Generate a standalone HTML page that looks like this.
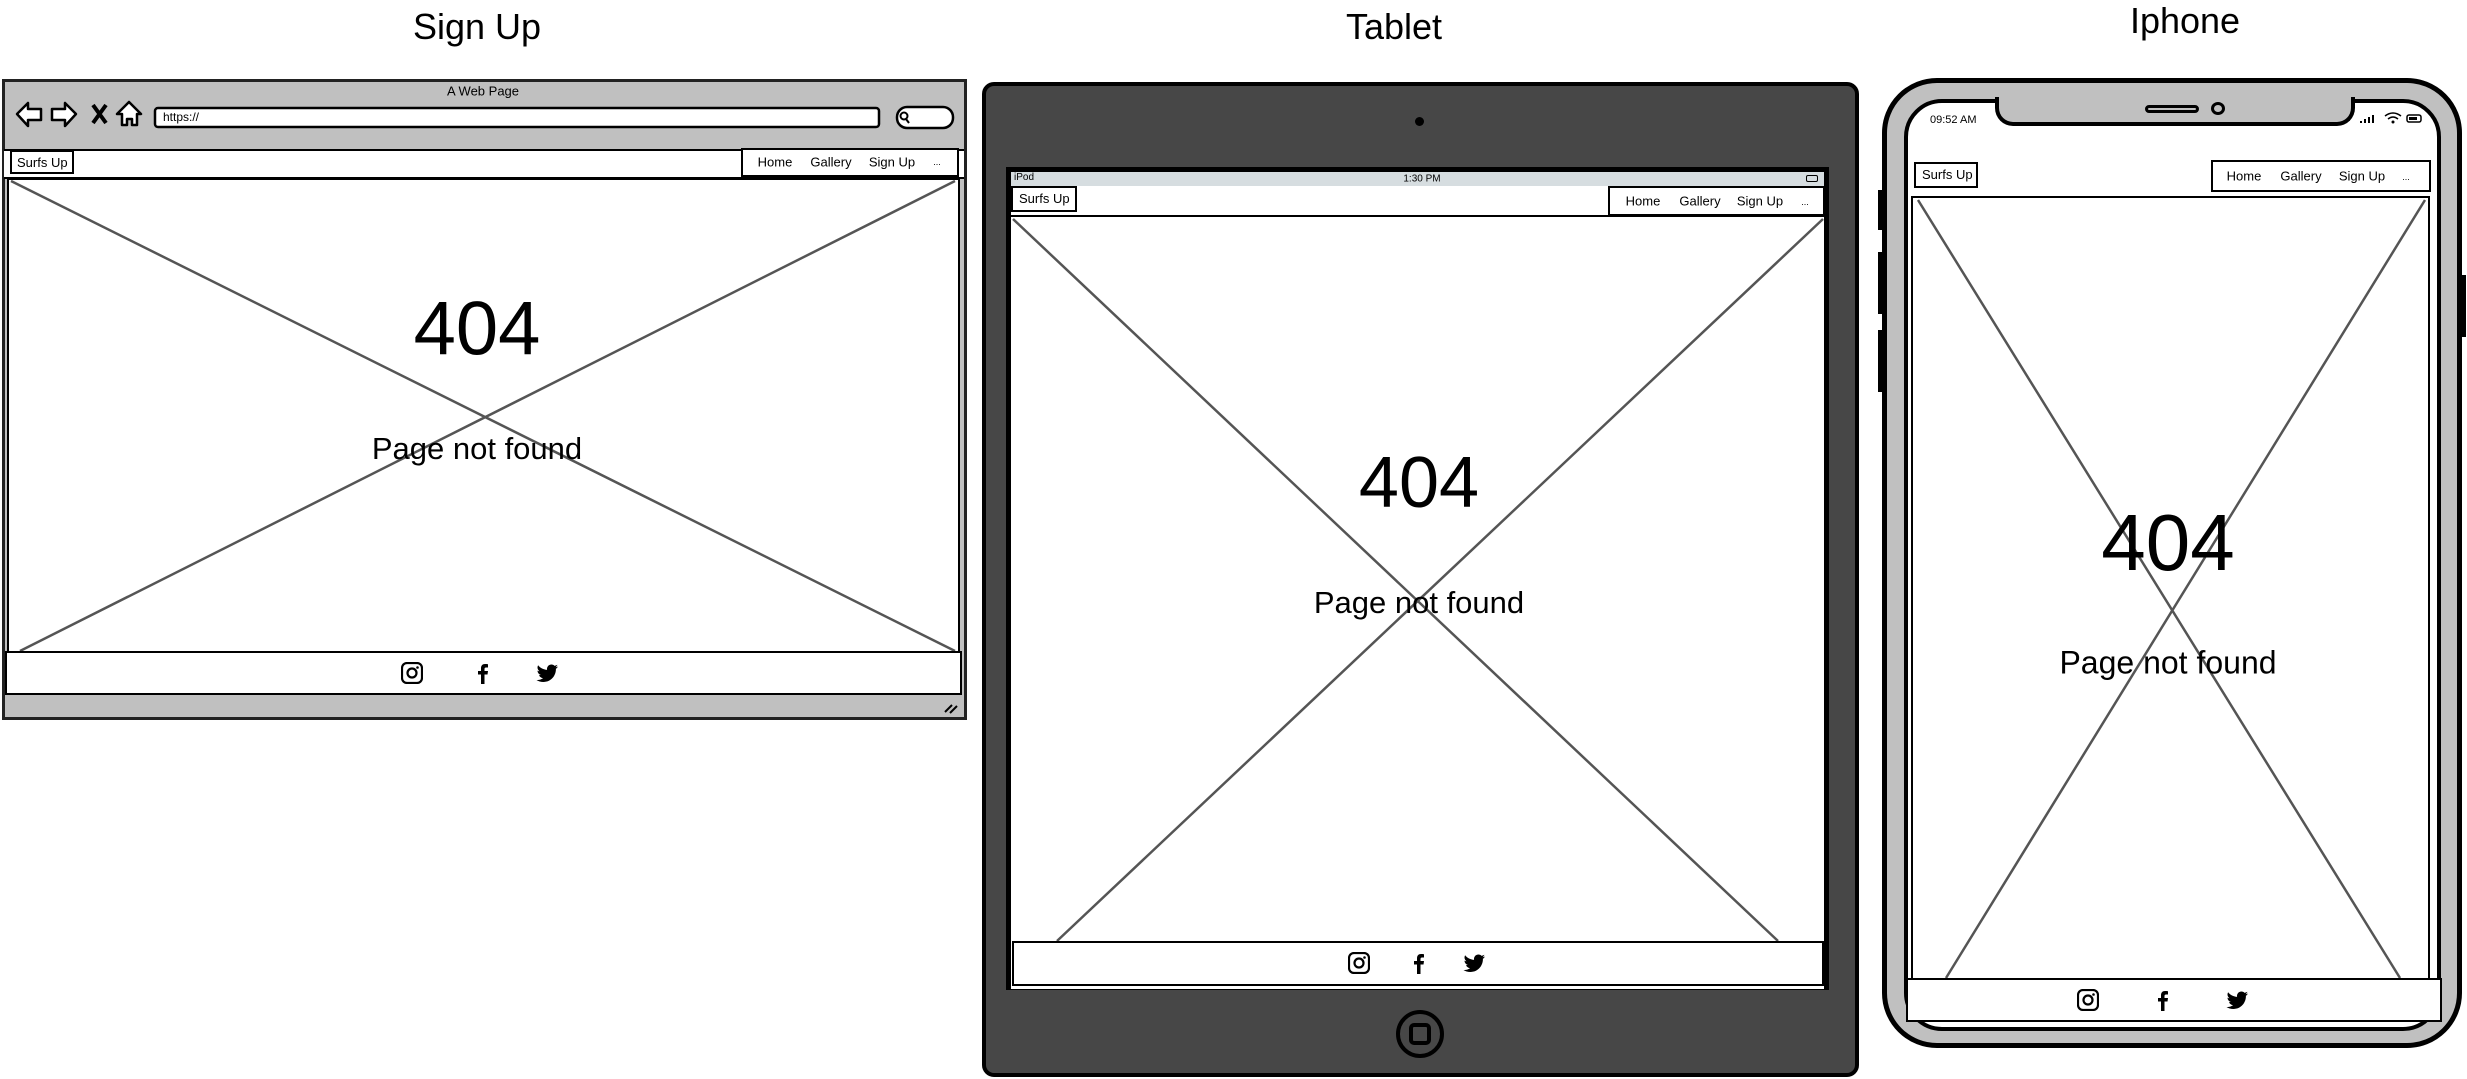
<!DOCTYPE html>
<html><head><meta charset="utf-8"><style>
*{margin:0;padding:0;box-sizing:border-box}
body{width:2467px;height:1079px;background:#fff;position:relative;overflow:hidden;font-family:"Liberation Sans",sans-serif;color:#000}
.a{position:absolute}
.t{position:absolute;white-space:nowrap;transform:translate(-50%,-50%)}
.box{position:absolute;border:2px solid #000;background:#fff}
</style></head><body>

<!-- titles -->
<div class="t" style="left:477px;top:27px;font-size:36px">Sign Up</div>
<div class="t" style="left:1394px;top:27px;font-size:36px">Tablet</div>
<div class="t" style="left:2185px;top:21px;font-size:36px">Iphone</div>

<!-- ===== Desktop browser ===== -->
<div class="a" style="left:2px;top:79px;width:965px;height:641px;background:#c0c0c0;border:3px solid #222"></div>
<div class="t" style="left:483px;top:91px;font-size:13px">A Web Page</div>
<svg class="a" style="left:0;top:0" width="980" height="740">
 <g fill="#fff" stroke="#000" stroke-width="2.5" stroke-linejoin="round">
  <path d="M17 114 L28 103 L28 109 L41 109 L41 120 L28 120 L28 126 Z"/>
  <path d="M76 114 L65 103 L65 109 L52 109 L52 120 L65 120 L65 126 Z"/>
  <path d="M129 102 L141 114 L137 114 L137 125 L132 125 L132 119 L127 119 L127 125 L122 125 L122 114 L117 114 Z"/>
  <rect x="155" y="108" width="724" height="19" rx="3"/>
  <rect x="897" y="107" width="56" height="21" rx="10"/>
 </g>
 <path d="M93 105 L106 123 M106 105 L93 123" stroke="#000" stroke-width="4"/>
 <circle cx="904" cy="116" r="3.5" fill="none" stroke="#000" stroke-width="2"/>
 <path d="M906 119 L909 123" stroke="#000" stroke-width="2"/>
 <path d="M945 712 L952 705 M950 713 L957 706" stroke="#000" stroke-width="2"/>
</svg>
<div class="a" style="left:163px;top:110px;font-size:12px">https://</div>
<div class="a" style="left:4px;top:149px;width:960px;height:30px;background:#fff;border-top:2px solid #000;border-bottom:2px solid #000"></div>
<div class="box" style="left:10px;top:150px;width:64px;height:24px;font-size:13px;padding:3px 0 0 5px">Surfs Up</div>
<div class="box" style="left:741px;top:148px;width:218px;height:29px"></div>
<div class="t" style="left:775px;top:162px;font-size:13px">Home</div>
<div class="t" style="left:831px;top:162px;font-size:13px">Gallery</div>
<div class="t" style="left:892px;top:162px;font-size:13px">Sign Up</div>
<div class="t" style="left:937px;top:162px;font-size:9px">...</div>
<div class="box" style="left:7px;top:178px;width:953px;height:475px"></div>
<svg class="a" style="left:0;top:0" width="980" height="740">
 <path d="M11 181 L955 651 M955 181 L20 651" stroke="#555" stroke-width="2.5"/>
</svg>
<div class="t" style="left:477px;top:329px;font-size:76px">404</div>
<div class="t" style="left:477px;top:449px;font-size:31px">Page not found</div>
<div class="box" style="left:5px;top:651px;width:957px;height:44px"></div>

<!-- ===== Tablet ===== -->
<div class="a" style="left:982px;top:82px;width:877px;height:995px;background:#474747;border:4px solid #000;border-radius:12px"></div>
<div class="a" style="left:1415px;top:117px;width:9px;height:9px;border-radius:50%;background:#000"></div>
<div class="a" style="left:1006px;top:167px;width:823px;height:823px;background:#000"></div>
<div class="a" style="left:1011px;top:172px;width:813px;height:14px;background:#d6dde0"></div>
<div class="a" style="left:1014px;top:172px;font-size:10px">iPod</div>
<div class="t" style="left:1422px;top:179px;font-size:10px">1:30 PM</div>
<div class="a" style="left:1806px;top:175px;width:12px;height:7px;border:1.5px solid #000;border-radius:2px"></div>
<div class="a" style="left:1011px;top:186px;width:813px;height:803px;background:#fff"></div>
<div class="box" style="left:1011px;top:186px;width:66px;height:26px;font-size:13px;padding:3px 0 0 6px">Surfs Up</div>
<div class="box" style="left:1608px;top:186px;width:217px;height:30px"></div>
<div class="t" style="left:1643px;top:201px;font-size:13px">Home</div>
<div class="t" style="left:1700px;top:201px;font-size:13px">Gallery</div>
<div class="t" style="left:1760px;top:201px;font-size:13px">Sign Up</div>
<div class="t" style="left:1805px;top:202px;font-size:9px">...</div>
<div class="a" style="left:1011px;top:215px;width:813px;height:2px;background:#000"></div>
<svg class="a" style="left:0;top:0" width="2467" height="1079">
 <path d="M1013 219 L1778 941 M1823 219 L1057 941" stroke="#555" stroke-width="2.5"/>
</svg>
<div class="t" style="left:1419px;top:483px;font-size:72px">404</div>
<div class="t" style="left:1419px;top:603px;font-size:31px">Page not found</div>
<div class="box" style="left:1012px;top:941px;width:812px;height:45px"></div>
<div class="a" style="left:1396px;top:1010px;width:48px;height:48px;border-radius:50%;border:4px solid #000"></div>
<div class="a" style="left:1409px;top:1023px;width:22px;height:22px;border-radius:5px;border:4px solid #000"></div>

<!-- ===== iPhone ===== -->
<div class="a" style="left:1878px;top:75px;width:8px;height:40px;background:#000;top:190px"></div>
<div class="a" style="left:1878px;top:252px;width:8px;height:62px;background:#000"></div>
<div class="a" style="left:1878px;top:330px;width:8px;height:62px;background:#000"></div>
<div class="a" style="left:2458px;top:275px;width:8px;height:62px;background:#000"></div>
<div class="a" style="left:1882px;top:78px;width:580px;height:970px;background:#c0c0c0;border:5px solid #000;border-radius:55px"></div>
<div class="a" style="left:1904px;top:99px;width:537px;height:932px;background:#fff;border:4px solid #000;border-radius:38px"></div>
<div class="a" style="left:1995px;top:97px;width:360px;height:29px;background:#c0c0c0;border:4px solid #000;border-top:none;border-radius:0 0 18px 18px"></div>
<div class="a" style="left:2145px;top:105px;width:54px;height:8px;border:3px solid #000;border-radius:4px;background:#c0c0c0"></div>
<div class="a" style="left:2211px;top:102px;width:14px;height:13px;border:3px solid #000;border-radius:50%"></div>
<div class="a" style="left:1930px;top:114px;font-size:11px">09:52 AM</div>
<svg class="a" style="left:2355px;top:108px" width="70" height="20">
 <path d="M6 15v-2M10 15v-4M14 15v-6M18 15v-8" stroke="#000" stroke-width="2"/>
 <path d="M30 8 q8 -6 16 0 M33 11 q5 -4 10 0" fill="none" stroke="#000" stroke-width="1.5"/>
 <circle cx="38" cy="14" r="1.5"/>
 <rect x="52" y="7" width="14" height="7" rx="2" fill="none" stroke="#000" stroke-width="1.5"/>
 <rect x="54" y="9" width="8" height="3"/>
</svg>
<div class="box" style="left:1914px;top:162px;width:64px;height:26px;font-size:13px;padding:3px 0 0 6px">Surfs Up</div>
<div class="box" style="left:2211px;top:160px;width:220px;height:32px"></div>
<div class="t" style="left:2244px;top:176px;font-size:13px">Home</div>
<div class="t" style="left:2301px;top:176px;font-size:13px">Gallery</div>
<div class="t" style="left:2362px;top:176px;font-size:13px">Sign Up</div>
<div class="t" style="left:2406px;top:177px;font-size:9px">...</div>
<div class="box" style="left:1911px;top:196px;width:519px;height:786px"></div>
<svg class="a" style="left:0;top:0" width="2467" height="1079">
 <path d="M1918 200 L2400 978 M2425 200 L1946 978" stroke="#555" stroke-width="2.5"/>
</svg>
<div class="t" style="left:2168px;top:543px;font-size:80px">404</div>
<div class="t" style="left:2168px;top:663px;font-size:32px">Page not found</div>
<div class="box" style="left:1906px;top:978px;width:536px;height:44px"></div>

<!-- social icons -->
<svg width="0" height="0" style="position:absolute"><defs>
 <g id="ig"><rect x="1" y="1" width="20" height="20" rx="5" fill="none" stroke="#000" stroke-width="2.2"/><circle cx="11" cy="11" r="4.5" fill="none" stroke="#000" stroke-width="2.2"/><circle cx="16.5" cy="5.5" r="1.3"/></g>
 <g id="fb"><path d="M12.5 22 V12.5 H15.5 L16 9 H12.5 V7 C12.5 6 13 5.5 14 5.5 H16 V2.2 C15 2 14 2 13 2 C10.5 2 9 3.6 9 6.3 V9 H6 V12.5 H9 V22 Z"/></g>
 <g id="tw"><path d="M22 4.5c-.8.4-1.6.6-2.5.7.9-.5 1.6-1.4 1.9-2.4-.8.5-1.8.9-2.8 1.1C17.8 3 16.7 2.5 15.4 2.5c-2.4 0-4.4 2-4.4 4.4 0 .3 0 .7.1 1C7.5 7.7 4.3 6 2.1 3.3c-.4.7-.6 1.4-.6 2.2 0 1.5.8 2.9 2 3.7-.7 0-1.4-.2-2-.6 0 2.1 1.5 3.9 3.5 4.3-.4.1-.8.2-1.2.2-.3 0-.6 0-.8-.1.6 1.8 2.2 3 4.1 3.1-1.5 1.2-3.4 1.9-5.5 1.9H.5c2 1.3 4.3 2 6.8 2 8.1 0 12.6-6.7 12.6-12.6v-.6c.9-.6 1.6-1.4 2.1-2.3z"/></g>
</defs></svg>
<svg class="a" style="left:401px;top:662px" width="22" height="22"><use href="#ig"/></svg>
<svg class="a" style="left:472px;top:662px" width="22" height="22"><use href="#fb"/></svg>
<svg class="a" style="left:536px;top:662px" width="23" height="22"><use href="#tw"/></svg>
<svg class="a" style="left:1348px;top:952px" width="22" height="22"><use href="#ig"/></svg>
<svg class="a" style="left:1408px;top:952px" width="22" height="22"><use href="#fb"/></svg>
<svg class="a" style="left:1463px;top:952px" width="23" height="22"><use href="#tw"/></svg>
<svg class="a" style="left:2077px;top:989px" width="22" height="22"><use href="#ig"/></svg>
<svg class="a" style="left:2152px;top:989px" width="22" height="22"><use href="#fb"/></svg>
<svg class="a" style="left:2226px;top:989px" width="23" height="22"><use href="#tw"/></svg>
</body></html>
